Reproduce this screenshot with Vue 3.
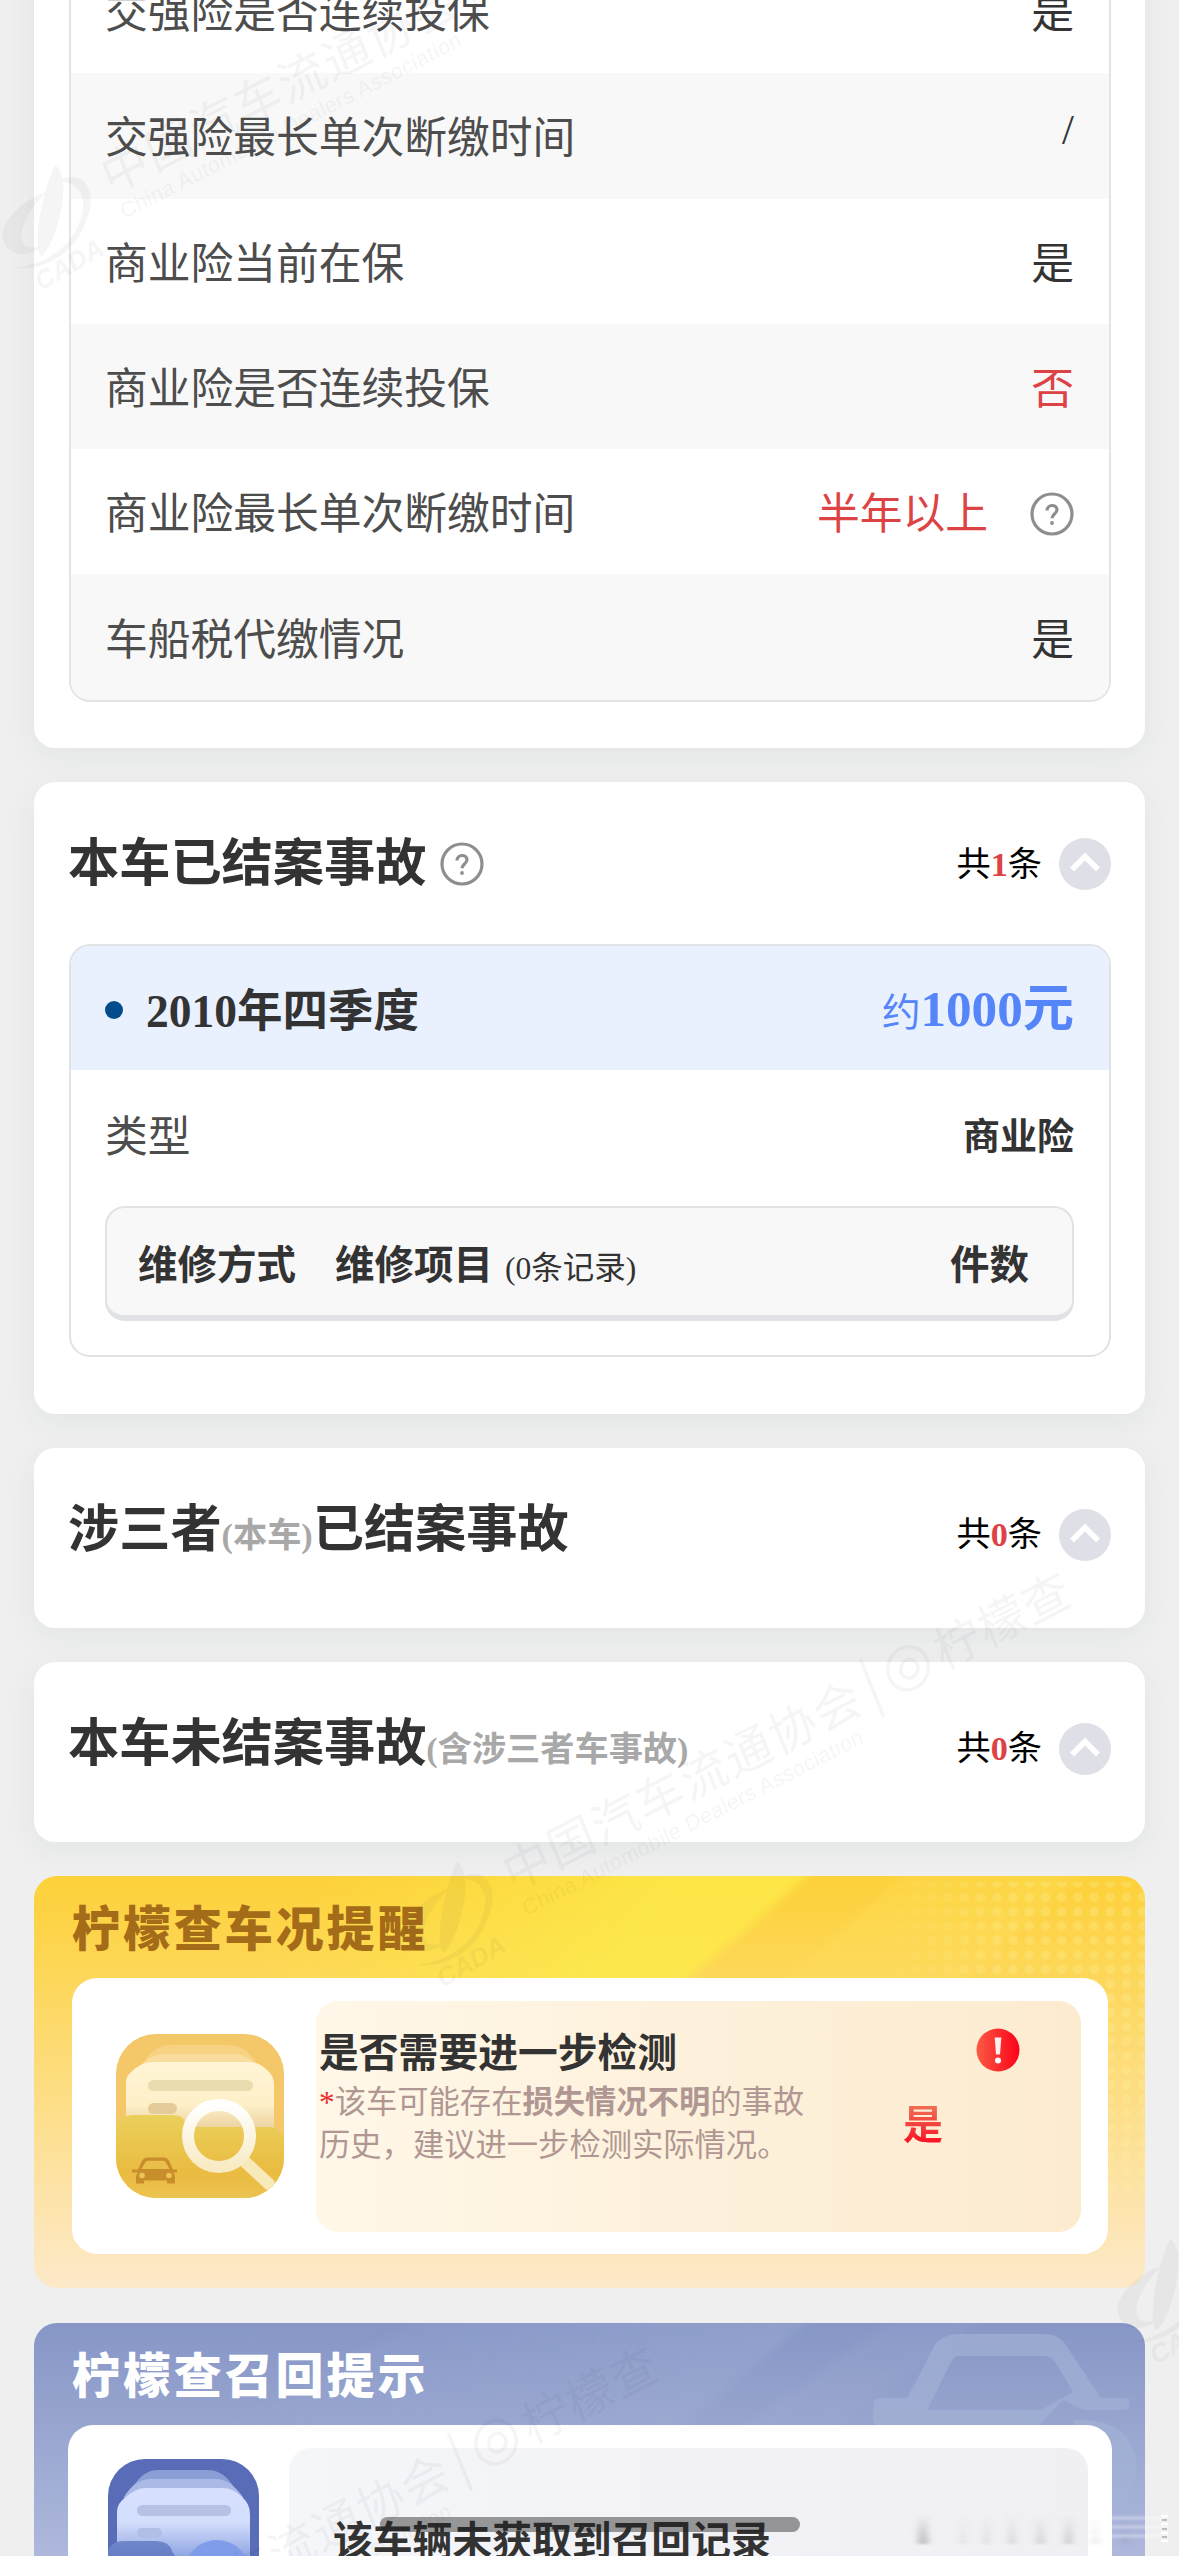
<script setup>
const rows = [
  { label: '交强险是否连续投保', value: '是' },
  { label: '交强险最长单次断缴时间', value: '/', slash: true },
  { label: '商业险当前在保', value: '是' },
  { label: '商业险是否连续投保', value: '否', warn: true },
  { label: '商业险最长单次断缴时间', value: '半年以上', warn: true, help: true },
  { label: '车船税代缴情况', value: '是' },
]
const marks = [
  { x: -402, y: -1697 },
  { x: 0, y: 0 },
  { x: -412, y: 774 },
  { x: 713, y: 377 },
]
const streaks = [
  [918, 10, 0.3], [960, 6, 0.08], [983, 7, 0.1], [1008, 8, 0.13], [1036, 9, 0.15], [1064, 9, 0.18], [1092, 7, 0.1], [1122, 6, 0.12],
]
</script>

<template>
  <div class="page">
    <section class="card insurance">
      <div class="table">
        <div v-for="(r, i) in rows" :key="i" class="row">
          <span class="label">{{ r.label }}</span>
          <span class="value" :class="{ warn: r.warn, slash: r.slash }">{{ r.value }}</span>
          <svg v-if="r.help" class="help" viewBox="0 0 44 44"><circle cx="22" cy="22" r="20" /><path d="M17 18.500c0-6.500 10-6.500 10-.8 0 4-5 4.600-5 8.500" /><circle class="dot" cx="22" cy="31" r="1.900" /></svg>
        </div>
      </div>
    </section>

    <section class="card settled">
      <header class="head">
        <h2>本车已结案事故</h2>
        <svg class="help title-help" viewBox="0 0 44 44"><circle cx="22" cy="22" r="20" /><path d="M17 18.500c0-6.500 10-6.500 10-.8 0 4-5 4.600-5 8.500" /><circle class="dot" cx="22" cy="31" r="1.900" /></svg>
        <span class="count">共<b>1</b>条</span>
        <svg class="fold" viewBox="0 0 52 52"><circle cx="26" cy="26" r="26" /><path d="M13 31.500 26 18.500 39 31.500" /></svg>
      </header>
      <div class="event">
        <div class="event-head">
          <i class="bullet"></i>
          <b class="period">2010年四季度</b>
          <span class="money">约<b>1000元</b></span>
        </div>
        <div class="event-type"><span>类型</span><b>商业险</b></div>
        <div class="repair">
          <b>维修方式</b><b class="item">维修项目</b><span>(0条记录)</span><b class="qty">件数</b>
        </div>
      </div>
    </section>

    <section class="card slim">
      <header class="head">
        <h2>涉三者<small>(本车)</small>已结案事故</h2>
        <span class="count">共<b>0</b>条</span>
        <svg class="fold" viewBox="0 0 52 52"><circle cx="26" cy="26" r="26" /><path d="M13 31.500 26 18.500 39 31.500" /></svg>
      </header>
    </section>

    <section class="card slim">
      <header class="head">
        <h2>本车未结案事故<small>(含涉三者车事故)</small></h2>
        <span class="count">共<b>0</b>条</span>
        <svg class="fold" viewBox="0 0 52 52"><circle cx="26" cy="26" r="26" /><path d="M13 31.500 26 18.500 39 31.500" /></svg>
      </header>
    </section>

    <section class="notice yellow">
      <svg class="backdrop" viewBox="0 0 1112 412" preserveAspectRatio="none">
        <defs>
          <linearGradient id="yb" x1="0" y1="0" x2="0" y2="1"><stop offset="0" stop-color="#fdd139" /><stop offset=".25" stop-color="#fdd75a" /><stop offset=".85" stop-color="#fde5b4" /><stop offset="1" stop-color="#fde9c9" /></linearGradient>
          <linearGradient id="yr" gradientUnits="userSpaceOnUse" x1="290" y1="0" x2="560" y2="210"><stop offset="0" stop-color="#fdec48" stop-opacity="0" /><stop offset=".8" stop-color="#fdec4a" stop-opacity=".75" /></linearGradient>
          <linearGradient id="yf" x1="0" y1="0" x2="1" y2="0"><stop offset="0" stop-color="#fff" stop-opacity="0" /><stop offset=".5" stop-color="#fff" /></linearGradient>
          <pattern id="yd" width="16.200" height="14.400" patternUnits="userSpaceOnUse"><circle cx="8" cy="7" r="4.800" fill="#fff3a0" opacity=".26" /></pattern>
          <mask id="ym"><rect x="840" width="272" height="412" fill="url(#yf)" /></mask>
          <filter id="soft"><feGaussianBlur stdDeviation="5" /></filter>
        </defs>
        <rect width="1112" height="412" fill="url(#yb)" />
        <path d="M300 -10H785L625 130H100Z" fill="url(#yr)" filter="url(#soft)" />
        <path d="M880 -10H1060L900 130H725Z" fill="#ffe66a" opacity=".22" filter="url(#soft)" />
        <rect x="840" y="6" width="272" height="316" fill="url(#yd)" mask="url(#ym)" />
      </svg>
      <h3>柠檬查车况提醒</h3>
      <div class="panel">
        <svg class="picture" viewBox="0 0 168 164">
          <defs>
            <clipPath id="yc"><rect width="168" height="164" rx="40" /></clipPath>
            <linearGradient id="yp" x1="0" y1="0" x2="0" y2="1"><stop offset="0" stop-color="#fff4d6" /><stop offset=".55" stop-color="#fdf0c8" /><stop offset="1" stop-color="#e6c58f" /></linearGradient>
            <linearGradient id="yo" x1="0" y1="0" x2="0" y2="1"><stop offset="0" stop-color="#ead05c" /><stop offset=".7" stop-color="#eabb40" /><stop offset="1" stop-color="#ebc350" /></linearGradient>
            <linearGradient id="yl" x1="0" y1="0" x2="0" y2="1"><stop offset="0" stop-color="#fff" /><stop offset="1" stop-color="#f8ebc4" /></linearGradient>
          </defs>
          <g clip-path="url(#yc)">
            <rect width="168" height="164" fill="#f4c768" />
            <path d="M28 28Q38 11 54 11H112Q128 11 138 25L148 40H20Z" fill="#f7d283" />
            <path d="M20 38Q32 20 48 20H118Q134 20 146 38V60H20Z" fill="#fadc9d" />
            <path d="M10 105V48Q10 43 14 39Q25 28 36 28H134Q143 28 151 36Q158 42 158 50V105Z" fill="url(#yp)" />
            <rect x="32" y="46" width="105" height="11" rx="5.500" fill="#e9dcae" />
            <rect x="32" y="69" width="29" height="11" rx="5.500" fill="#e3cc9a" />
            <path d="M0 91Q4 81 16 81H57Q67 81 69 88Q70 93 78 93H153Q164 94 168 104V164H0Z" fill="url(#yo)" />
            <path d="M126 125 153 150" stroke="#f8e9b9" stroke-width="12" stroke-linecap="round" />
            <circle cx="103" cy="102" r="31" fill="none" stroke="url(#yl)" stroke-width="12" />
            <g fill="#c98e2c"><path d="M16 135.500h6l4-9q2-3 5-3h17q3 0 5 3l4 9h4v3h-4q2 2 2 5v6h-8v-3H28v3h-8v-6q0-3 2-5h-6z" /><path d="m25.500 135 4-7q1-1.200 3-1.200h14q2 0 3 1.200l4 7z" fill="#eabf49" /><circle cx="26" cy="141.500" r="2.800" fill="#edc45a" /><circle cx="53" cy="141.500" r="2.800" fill="#edc45a" /></g>
          </g>
        </svg>
        <div class="tip">
          <div class="copy">
            <strong>是否需要进一步检测</strong>
            <p><i>*</i>该车可能存在<b>损失情况不明</b>的事故历史，建议进一步检测实际情况。</p>
          </div>
          <b class="answer">是</b>
          <svg class="alert" viewBox="0 0 44 44"><defs><linearGradient id="al"><stop offset="0" stop-color="#fb5a43" /><stop offset="1" stop-color="#fb0219" /></linearGradient></defs><circle cx="22" cy="22" r="21.500" fill="url(#al)" /><path d="M18.700 9.500h6.600l-1.300 17h-4z" fill="#fff" opacity=".93" /><circle cx="22" cy="32.500" r="3" fill="#fff" /></svg>
        </div>
      </div>
    </section>

    <section class="notice blue">
      <svg class="backdrop" viewBox="0 0 1112 412" preserveAspectRatio="none">
        <defs>
          <linearGradient id="bb" x1="0" y1="0" x2="0" y2="1"><stop offset="0" stop-color="#8696c6" /><stop offset=".25" stop-color="#98a5cf" /><stop offset=".55" stop-color="#adb7dc" /><stop offset="1" stop-color="#dfe5f5" /></linearGradient>
          <linearGradient id="br"><stop offset="0" stop-color="#a7b5dc" stop-opacity="0" /><stop offset="1" stop-color="#a5b5d8" stop-opacity=".3" /></linearGradient>
        </defs>
        <rect width="1112" height="412" fill="url(#bb)" />
        <path d="M400 -10H785L640 110H180Z" fill="url(#br)" filter="url(#soft)" />
        <path d="M870 -10H960L790 110H700Z" fill="#aab8d8" opacity=".13" filter="url(#soft)" />
        <g fill="#a4b2d6" opacity=".65">
          <path fill-rule="evenodd" d="M874 75 900 25Q908 11 926 11H1010Q1027 11 1034 24L1068 75H1094Q1098 76 1096 84Q1095 87 1090 87H1050L1030 77 1005 103H846Q838 100 840 92V80Q840 75 847 75ZM894 87H1008L1040 69 1022 39Q1018 33 1011 33H926Q921 33 918 39Z" />
          <path d="M1040 97Q1094 94 1103 135Q1108 161 1085 183L1060 165Z" />
        </g>
      </svg>
      <h3>柠檬查召回提示</h3>
      <div class="panel">
        <svg class="picture" viewBox="0 0 151 147">
          <defs>
            <clipPath id="bc"><rect width="151" height="147" rx="37" /></clipPath>
            <linearGradient id="bp" x1="0" y1="0" x2="0" y2="1"><stop offset="0" stop-color="#d7e1ff" /><stop offset=".45" stop-color="#d3ddfc" /><stop offset="1" stop-color="#8299dc" /></linearGradient>
            <linearGradient id="bo" x1="0" y1="0" x2="0" y2="1"><stop offset="0" stop-color="#6f86c9" /><stop offset="1" stop-color="#4b65b8" /></linearGradient>
          </defs>
          <g clip-path="url(#bc)">
            <rect width="151" height="147" fill="#596cb7" />
            <path d="M25 28Q35 11 50 11H100Q115 11 126 28V45H25Z" fill="#8c9ed6" />
            <path d="M16 38Q27 20 42 20H108Q122 20 135 38V50H16Z" fill="#aab9e6" />
            <path d="M9 105V53Q9 44 18 38Q28 29 38 29H115Q125 29 134 38Q142 45 142 55V105Z" fill="url(#bp)" />
            <rect x="29" y="46" width="94" height="11" rx="5.500" fill="#b6c1e5" />
            <rect x="29" y="69" width="25" height="10" rx="5" fill="#b1bee5" />
            <path d="M0 91Q5 82 15 82H48Q61 82 64 92L72 105H151V147H0Z" fill="url(#bo)" />
            <circle cx="109" cy="114" r="33" fill="#7e9ce9" />
          </g>
        </svg>
        <div class="tip"><strong>该车辆未获取到召回记录</strong></div>
      </div>
    </section>

    <svg class="watermark" viewBox="0 0 1179 2556" aria-hidden="true">
      <g v-for="(m, i) in marks" :key="i" :transform="`translate(${m.x} ${m.y})`">
        <g transform="translate(512 1892) rotate(-27.2) skewX(-5)">
          <text x="0" y="0" class="wm-cn">中国汽车流通协会</text>
          <text x="4" y="28" class="wm-en">China Automobile Dealers Association</text>
          <path d="M412 -48V14" class="wm-line" />
          <circle cx="453" cy="-18" r="21" class="wm-line" /><circle cx="454" cy="-17" r="9" class="wm-line" />
          <text x="484" y="0" class="wm-cn">柠檬查</text>
        </g>
        <path class="wm-logo" d="M457 1862c19 12 2 78-13 91-11-7 1-68 13-91zM459 1878c28-14 44 10 26 48-16 31-43 41-68 39 38-5 62-27 68-58 2-19-8-28-26-29zM449 1889c-29 26-37 66-4 53-23 22-53 1-35-25 9-13 24-24 39-28z" />
        <text class="wm-tag" transform="translate(443 1988) rotate(-30)">CADA</text>
      </g>
    </svg>

    <div class="home-bar"></div>
    <svg class="smudge" viewBox="0 0 1179 60">
      <defs><linearGradient id="sm" x1="0" y1="0" x2="0" y2="1"><stop offset="0" stop-color="#777" stop-opacity="0" /><stop offset="1" stop-color="#777" /></linearGradient><filter id="sb"><feGaussianBlur stdDeviation="3.500 1" /></filter></defs>
      <g filter="url(#sb)"><rect v-for="s in streaks" :key="s[0]" :x="s[0]" y="14" :width="s[1]" height="30" fill="url(#sm)" :opacity="s[2] * 1.5" />
        <path d="M1090 18H1168M1090 27H1168M1090 36H1168" stroke="#fff" stroke-width="3" opacity=".35" /></g>
      <path d="M1161 16h7M1161 24h7M1161 33h7M1161 41h7" stroke="#fff" stroke-width="2.500" />
      <path d="M1162 20h5M1162 29h5M1162 37h5" stroke="#aaa" stroke-width="1.500" />
    </svg>
  </div>
</template>

<style>
body { margin: 0; background: #efefef; }
</style>

<style scoped>
.page {
  position: relative;
  box-sizing: border-box;
  width: 1179px;
  height: 2556px;
  overflow: hidden;
  padding: 0 34px;
  display: flex;
  flex-direction: column;
  background: #efefef;
  color: #333;
  font-family: "Liberation Serif", "Noto Sans CJK SC", serif;
}
.card {
  flex: none;
  box-sizing: border-box;
  margin-bottom: 34px;
  padding: 0 34px 0 35px;
  border-radius: 21px;
  background: #fff;
  box-shadow: 0 8px 30px rgba(40, 60, 90, 0.06);
}
.insurance { margin-top: -80px; height: 828px; padding-top: 28px; border-radius: 0 0 21px 21px; }
.table { border: 2px solid #e3e4e7; border-top: 0; border-radius: 0 0 21px 21px; overflow: hidden; }
.row { display: flex; align-items: center; height: 125.3px; padding: 0 35px 0 34px; font-size: 42.75px; line-height: 60px; }
.row:nth-child(even) { background: #f8f8f8; }
.label { flex: 1; padding-top: 7px; color: #4d4d4d; }
.value { padding-top: 7px; color: #333; }
.value.warn { color: #dd4345; }
.value.slash { padding: 0; margin-top: -12px; }
.help { flex: none; width: 44px; height: 44px; margin: 4px 0 0 42px; fill: none; stroke: #8e8e8e; stroke-width: 3.200; }
.help .dot { fill: #8e8e8e; stroke: none; }
.head { display: flex; align-items: center; height: 163px; }
.settled { height: 632px; }
.slim { height: 180px; }
.slim .head { height: 172px; }
h2 { margin: 0 auto 0 -1px; font-size: 51.200px; line-height: 70px; font-weight: 700; }
.slim h2 { margin-top: -3px; }
h2 small { font-size: 34.200px; color: #a8a8a8; }
.settled h2 { margin-right: 0; }
.title-help { margin: 0 auto 0 14px; }
.count { margin-top: 2px; font-size: 34.200px; line-height: 50px; color: #000; }
.count b { color: #dd4345; }
.fold { flex: none; width: 52px; height: 52px; margin: 1px 0 0 17px; }
.fold circle { fill: #dfe0e7; }
.fold path { fill: none; stroke: #fff; stroke-width: 5.500; }
.event { box-sizing: border-box; height: 413px; margin-top: -1px; border: 2px solid #e0e2e6; border-radius: 21px; overflow: hidden; }
.event-head { display: flex; align-items: center; height: 124px; padding: 0 35px 0 34px; background: #e9f1fe; }
.bullet { width: 18px; height: 18px; margin-top: 3px; border-radius: 50%; background: #034c8c; }
.period { flex: 1; margin-left: 23px; padding-top: 8px; font-size: 45.500px; line-height: 64px; }
.money { padding-top: 5px; color: #5585f8; font-size: 38.500px; line-height: 70px; }
.money b { font-size: 51.200px; }
.event-type { display: flex; justify-content: space-between; align-items: center; height: 136px; padding: 0 35px 0 34px; font-size: 42.750px; line-height: 60px; color: #4d4d4d; }
.event-type b { font-size: 37px; color: #333; }
.repair { display: flex; align-items: baseline; box-sizing: border-box; height: 115px; margin: 0 35px 0 34px; padding: 28px 43px 0 31px; border: 2px solid #e1e2e6; border-bottom-width: 6px; border-radius: 20px; background: #f8f8f8; font-size: 39.500px; line-height: 60px; }
.repair .item { margin-left: 39px; }
.repair span { margin-left: 12px; font-size: 31.500px; }
.repair .qty { margin-left: auto; }
.notice { position: relative; flex: none; box-sizing: border-box; width: 1111px; height: 412px; border-radius: 23px; overflow: hidden; }
.yellow { margin-bottom: 35px; }
.backdrop { position: absolute; inset: 0; width: 100%; height: 100%; }
h3 { position: relative; margin: 0; padding: 16px 0 0 38px; height: 86px; font-family: "Noto Sans CJK SC", sans-serif; font-weight: 900; font-size: 48px; letter-spacing: 2.900px; line-height: 66px; color: #a46b19; }
.panel { position: relative; display: flex; align-items: center; box-sizing: border-box; height: 276px; margin: 0 37px 0 38px; border-radius: 25px; background: #fff; }
.picture { flex: none; width: 168px; height: 164px; margin-left: 44px; }
.tip { display: flex; box-sizing: border-box; position: relative; width: 765px; height: 231px; margin-left: 32px; border-radius: 22px; background: linear-gradient(90deg, #fff7e8, #fcebcf); }
.copy { width: 500px; padding: 24px 0 0 3px; }
strong { display: block; font-size: 39.800px; line-height: 58px; }
p { margin: -2px 0 0; font-size: 31.300px; line-height: 43px; color: #b09793; }
p i { color: #e92b2b; font-style: normal; }
.answer { margin: 96px 0 0 84px; height: 58px; font-size: 40px; line-height: 58px; color: transparent; background: linear-gradient(#f16a52 20%, #fa1024 80%); background-clip: text; -webkit-background-clip: text; }
.alert { width: 44px; height: 44px; margin: 27px 0 0 33px; }
.blue h3 { color: #fff; }
.blue .panel { height: 276px; margin: 0 33px 0 34px; align-items: flex-start; }
.blue .picture { width: 151px; height: 147px; margin: 34px 0 0 40px; }
.blue .tip { width: 799px; margin: 23px 0 0 30px; padding: 65px 0 0 44px; background: linear-gradient(90deg, #f5f6f9, #efeff4); }
.watermark { position: absolute; left: 0; top: 0; width: 1179px; height: 2556px; opacity: 0.04; pointer-events: none; }
.wm-cn { font-family: "Noto Sans CJK SC", sans-serif; font-size: 48px; letter-spacing: 1.800px; fill: #223; }
.wm-en { font-family: "Liberation Sans", sans-serif; font-size: 21.500px; letter-spacing: 0.500px; fill: #223; }
.wm-line { fill: none; stroke: #223; stroke-width: 3.500; }
.wm-logo { fill: #223; }
.wm-tag { font: italic 700 26px "Liberation Sans", sans-serif; fill: #223; }
.home-bar { position: absolute; left: 380px; top: 2517px; width: 420px; height: 15px; border-radius: 8px; background: rgba(30, 30, 30, 0.44); }
.smudge { position: absolute; left: 0; top: 2500px; width: 1179px; height: 60px; }
</style>
